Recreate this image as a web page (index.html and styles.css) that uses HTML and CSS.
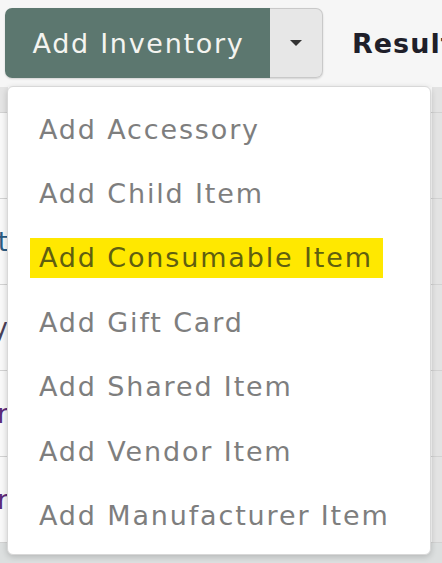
FILE: index.html
```html
<!DOCTYPE html>
<html>
<head>
<meta charset="utf-8">
<link rel="stylesheet" href="styles.css">
</head>
<body>
<div class="page">
  <div class="toolbar">
    <div class="btn-group">
      <button class="btn-main">Add Inventory</button>
      <button class="btn-caret"><span class="caret"></span></button>
    </div>
    <div class="result">Results</div>
  </div>
  <div class="table">
    <div class="row head"><div class="cell-left"></div><div class="cell-mid"></div><div class="cell-right"></div></div>
    <div class="row"><div class="cell-left"></div><div class="cell-mid"></div><div class="cell-right"></div></div>
    <div class="row"><div class="cell-left"><span class="frag blue">Widget</span></div><div class="cell-mid"></div><div class="cell-right"></div></div>
    <div class="row"><div class="cell-left"><span class="frag dark">Tray</span></div><div class="cell-mid"></div><div class="cell-right"></div></div>
    <div class="row"><div class="cell-left"><span class="frag purple">Vendor</span></div><div class="cell-mid"></div><div class="cell-right"></div></div>
    <div class="row"><div class="cell-left"><span class="frag purple">Vendor</span></div><div class="cell-mid"></div><div class="cell-right"></div></div>
    <div class="row foot"></div>
  </div>
  <ul class="menu">
    <li class="item">Add Accessory</li>
    <li class="item">Add Child Item</li>
    <li class="item"><span class="hl">Add Consumable Item</span></li>
    <li class="item">Add Gift Card</li>
    <li class="item">Add Shared Item</li>
    <li class="item">Add Vendor Item</li>
    <li class="item">Add Manufacturer Item</li>
  </ul>
</div>
</body>
</html>
```

FILE: styles.css
```css
html, body {
  margin: 0;
  padding: 0;
  background: #f6f6f6;
  font-family: "DejaVu Sans", sans-serif;
}
.page {
  position: relative;
  width: 442px;
  height: 563px;
  overflow: hidden;
}
.toolbar {
  display: flex;
  align-items: center;
  padding: 7px 0 0 5px;
  height: 72px;
}
.btn-group {
  display: flex;
  height: 70px;
  border-radius: 7px;
  box-shadow: 0 1px 2px rgba(0,0,0,0.15);
}
.btn-main {
  width: 265px;
  height: 70px;
  border: none;
  background: #5c776f;
  color: #f4f4f0;
  font-family: "DejaVu Sans", sans-serif;
  font-size: 27px;
  letter-spacing: 1.7px;
  border-radius: 7px 0 0 7px;
  padding: 0 0 0 2px;
}
.btn-caret {
  width: 53px;
  height: 70px;
  border: 1px solid #c9c9c9;
  border-left: none;
  background: #e7e7e7;
  border-radius: 0 7px 7px 0;
  display: flex;
  align-items: center;
  justify-content: center;
  padding: 0;
}
.caret {
  width: 0;
  height: 0;
  border-left: 6px solid transparent;
  border-right: 6px solid transparent;
  border-top: 6px solid #333;
}
.result {
  margin-left: 29px;
  font-size: 27px;
  font-weight: 700;
  letter-spacing: 1px;
  color: #1f1f2a;
  white-space: nowrap;
}
.table {
  display: flex;
  flex-direction: column;
  margin-top: 8px;
}
.row {
  display: flex;
  height: 86px;
  border-bottom: 1px solid #d2d2d2;
  box-sizing: border-box;
}
.row.head {
  height: 26px;
  background: #e4e4e4;
}
.row.foot {
  height: 30px;
  background: #dcdfdf;
  border: none;
}
.cell-left {
  width: 8px;
  display: flex;
  align-items: center;
  justify-content: flex-end;
  overflow: hidden;
  background: #f8f8f8;
}
.row.head .cell-left { background: #e4e4e4; }
.cell-mid {
  flex: 1;
  background: #fafafa;
}
.cell-right {
  width: 10px;
  background: #e3e3e3;
}
.frag {
  font-size: 26px;
  white-space: nowrap;
  flex-shrink: 0;
}
.blue { color: #2b5a80; }
.dark { color: #4a3f58; }
.purple { color: #5c2a7a; }
.menu {
  position: absolute;
  left: 7px;
  top: 86px;
  width: 424px;
  height: 469px;
  margin: 0;
  padding: 10px 0 0 0;
  box-sizing: border-box;
  list-style: none;
  background: #fff;
  border: 1px solid #d8d8d8;
  border-radius: 6px;
  box-shadow: 0 2px 6px rgba(0,0,0,0.18);
}
.item {
  height: 64.4px;
  display: flex;
  align-items: center;
  padding-left: 31px;
  font-size: 27px;
  letter-spacing: 1.85px;
  color: #7e7e7e;
  white-space: nowrap;
}
.hl {
  background: #ffe800;
  color: #5f5f10;
  margin-left: -9px;
  padding: 4px 10px 5px 9px;
}
```
